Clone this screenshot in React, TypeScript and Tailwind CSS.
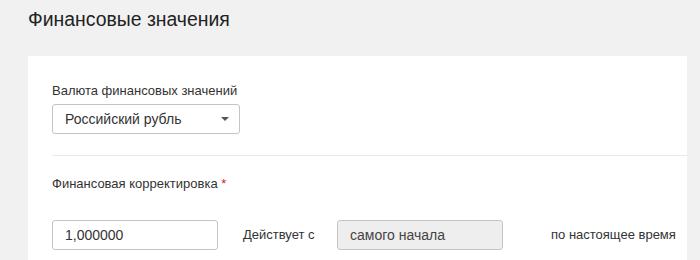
export default function App() {
  return (
    <div
      className="h-[260px] w-[700px] overflow-hidden bg-[#f1f1f1] text-[#333]"
      style={{ fontFamily: '"Liberation Sans", Arial, sans-serif' }}
    >
      <h1 className="pl-[28px] pt-[7px] text-[19.4px] leading-[24px] text-[#222] h-[56px]">
        Финансовые значения
      </h1>

      <div className="ml-[28px] mr-[13px] bg-white pl-[24px] pt-[27px] h-[220px]">
        <label className="block text-[13px] leading-[16px] mb-[5px]">
          Валюта финансовых значений
        </label>
        <div className="flex h-[30px] w-[188px] items-center justify-between rounded-[3px] border border-[#c4c4c4] pl-[12px] pr-[10px] text-[14px]">
          <span>Российский рубль</span>
          <span className="h-0 w-0 border-x-[4px] border-t-[4px] border-x-transparent border-t-[#555]" />
        </div>

        <div className="mt-[21px] h-px bg-[#e8e8e8]" />

        <div className="mt-[20px] text-[13px] leading-[16px]">
          Финансовая корректировка <span className="text-[#e02020]">*</span>
        </div>

        <div className="mt-[28px] flex items-center text-[13px]">
          <div className="flex h-[30px] w-[166px] items-center rounded-[3px] border border-[#c4c4c4] pl-[12px] text-[14px]">
            1,000000
          </div>
          <span className="ml-[25px] w-[94px]">Действует с</span>
          <div className="flex h-[30px] w-[166px] items-center rounded-[3px] border border-[#c4c4c4] bg-[#eeeeee] pl-[12px] text-[14px] text-[#444]">
            самого начала
          </div>
          <span className="ml-[48px]">по настоящее время</span>
        </div>
      </div>
    </div>
  );
}
